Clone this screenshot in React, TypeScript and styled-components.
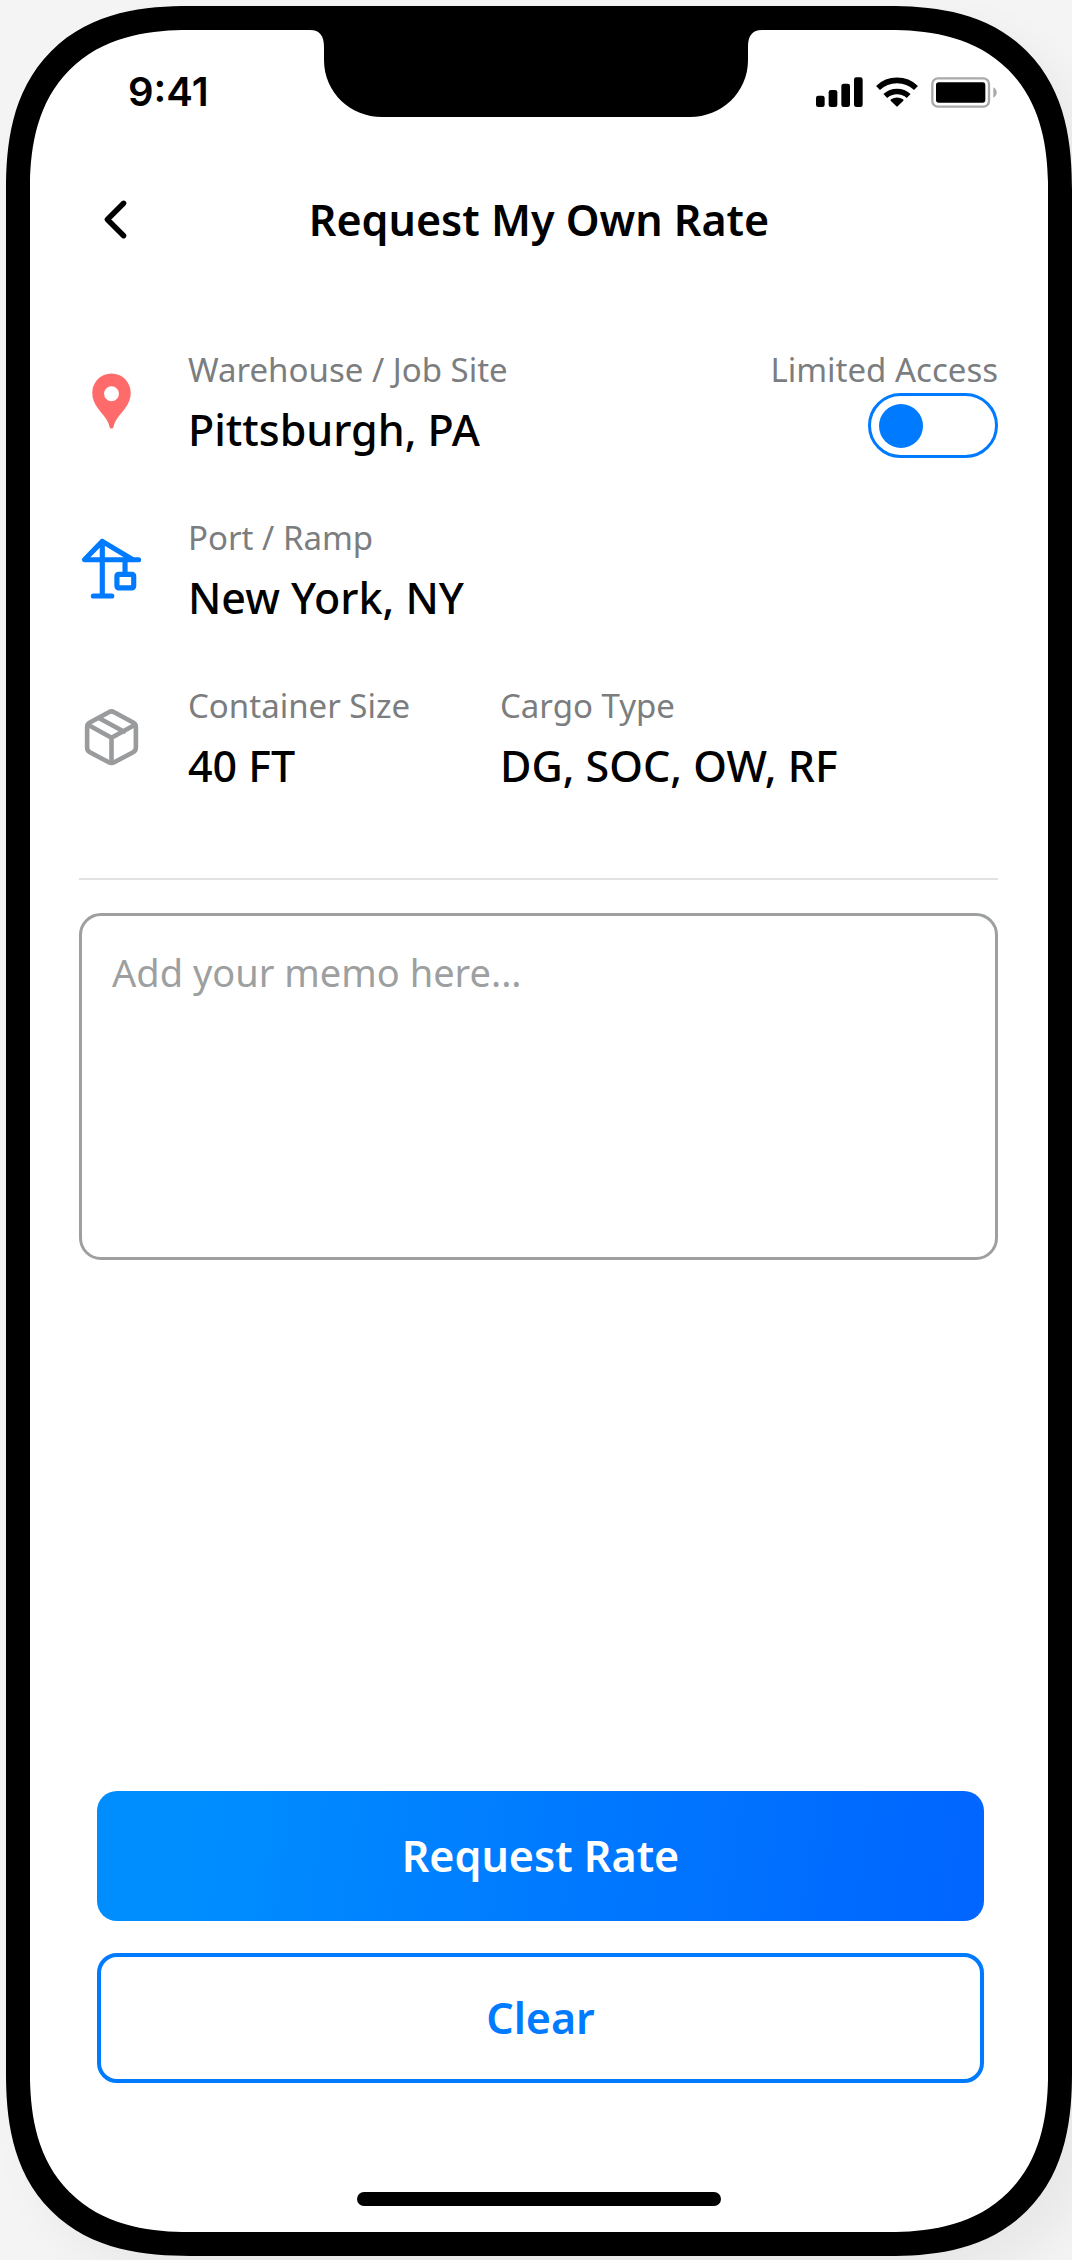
import React, { useState } from "react";
import styled, { createGlobalStyle } from "styled-components";
import { ChevronLeft } from "lucide-react";

const GlobalStyle = createGlobalStyle`
  *, *::before, *::after { box-sizing: border-box; }
  body {
    margin: 0;
    background: #f4f4f4;
    font-family: "Noto Sans", sans-serif;
    color: #000;
  }
  button, textarea, input { font: inherit; margin: 0; }
`;

const Page = styled.div`
  display: flex;
  min-height: 100vh;
  padding: 6px 0 4px 6px;
`;

const Phone = styled.main`
  position: relative;
  flex: 1;
  display: flex;
  flex-direction: column;
  border: 24px solid #000;
  border-radius: 152px;
  background: #fff;
  box-shadow: 24px 24px 48px rgba(0, 0, 0, 0.05);

  @supports (corner-shape: superellipse(1.3)) {
    border-radius: 184px;
    corner-shape: superellipse(1.3);
  }
`;

const Notch = styled.svg`
  position: absolute;
  top: -1px;
  left: calc(50% - 229px);
  width: 452px;
  height: 88px;
`;

const StatusBar = styled.div`
  display: flex;
  align-items: center;
  justify-content: space-between;
  height: 124px;
  padding: 0 51px 0 98px;
`;

const Clock = styled.time`
  font-family: Inter, sans-serif;
  font-size: 40px;
  font-weight: 600;
  line-height: 48px;
`;

const StatusIcons = styled.div`
  display: flex;
  align-items: center;
  gap: 13px;
`;

const Header = styled.header`
  display: grid;
  grid-template-columns: 65px 1fr 65px;
  align-items: center;
  margin-top: 33px;
  padding: 0 53px;
`;

const BackButton = styled.button`
  display: flex;
  padding: 0;
  border: 0;
  background: none;
  color: #000;
  cursor: pointer;
`;

const Title = styled.h1`
  margin: 0;
  font-size: 43px;
  font-weight: 600;
  line-height: 60px;
  text-align: center;
`;

const Details = styled.section`
  display: flex;
  flex-direction: column;
  gap: 56px;
  margin: 96px 50px 0 49px;
  padding-bottom: 82px;
  border-bottom: 2px solid #e2e2e2;
`;

const Row = styled.div`
  display: grid;
  grid-template-columns: 65px 312px 1fr;
  align-items: start;
`;

const RowIcon = styled.svg`
  width: 65px;
  height: 65px;
  margin-top: 21px;
`;

const Field = styled.div`
  display: flex;
  flex-direction: column;
  gap: 8px;
  padding-left: 44px;
  white-space: nowrap;
`;

const labelText = `
  color: #7b7d7f;
  font-size: 33px;
  line-height: 44px;
`;

const FieldLabel = styled.span`
  ${labelText}
`;

const FieldValue = styled.span`
  font-size: 43px;
  font-weight: 500;
  line-height: 60px;
`;

const Access = styled.label`
  ${labelText}
  justify-self: end;
  display: flex;
  flex-direction: column;
  align-items: flex-end;
  gap: 1px;
  white-space: nowrap;
  cursor: pointer;
`;

const Switch = styled.input`
  appearance: none;
  display: flex;
  align-items: center;
  width: 130px;
  height: 65px;
  padding: 0 8px;
  border: 3px solid #007bff;
  border-radius: 33px;
  cursor: pointer;

  &::before {
    content: "";
    width: 44px;
    height: 44px;
    border-radius: 50%;
    background: #007bff;
  }

  &:checked {
    justify-content: flex-end;
  }
`;

const Memo = styled.textarea`
  display: block;
  height: 347px;
  margin: 33px 50px 0 49px;
  padding: 30px;
  border: 3px solid #9d9fa0;
  border-radius: 22px;
  background: #fff;
  color: #000;
  font-size: 38px;
  line-height: 52px;
  resize: none;

  &::placeholder {
    color: #9d9fa0;
    opacity: 1;
  }
`;

const Actions = styled.div`
  display: flex;
  flex-direction: column;
  gap: 32px;
  margin-top: auto;
  padding: 48px 64px 0 67px;
`;

const ActionButton = styled.button<{ $primary?: boolean }>`
  height: 130px;
  border: ${(p) => (p.$primary ? "0" : "4px solid #007bff")};
  border-radius: 20px;
  background: ${(p) =>
    p.$primary ? "linear-gradient(98deg, #008eff 12%, #007bff 50%, #0066ff 96%)" : "#fff"};
  color: ${(p) => (p.$primary ? "#fff" : "#007bff")};
  font-size: 43px;
  font-weight: 600;
  line-height: 60px;
  cursor: pointer;
`;

const HomeIndicator = styled.div`
  align-self: center;
  width: 364px;
  height: 14px;
  margin: 109px 0 26px;
  border-radius: 7px;
  background: #000;
`;

function SignalIcon() {
  return (
    <svg width="47" height="30" viewBox="0 0 141 90" aria-hidden="true">
      <rect x="0" y="56" width="26" height="34" rx="7" />
      <rect x="38" y="39" width="26" height="51" rx="7" />
      <rect x="76" y="20" width="26" height="70" rx="7" />
      <rect x="114" y="1" width="26" height="89" rx="7" />
    </svg>
  );
}

function WifiIcon() {
  return (
    <svg width="42" height="30" viewBox="0 0 126 90" aria-hidden="true">
      <g fill="none" stroke="#000" strokeWidth="17">
        <path d="M6 33A83 83 0 0 1 120 33" />
        <path d="M28 57A52 52 0 0 1 98 57" />
      </g>
      <path d="M44 71Q42 69 45 67Q63 56 81 67Q84 69 82 71L65 88Q63 90 61 88Z" />
    </svg>
  );
}

function BatteryIcon() {
  return (
    <svg width="66" height="31" viewBox="0 0 198 93" aria-hidden="true">
      <rect x="4" y="4" width="170" height="85" rx="17" fill="none" stroke="#a9a9a9" strokeWidth="7" />
      <rect x="15" y="16" width="148" height="61" rx="8" />
      <path d="M187 31Q197 36 197 46.500Q197 57 187 62Z" fill="#a9a9a9" />
    </svg>
  );
}

function PinIcon() {
  return (
    <RowIcon viewBox="0 0 24 24" aria-hidden="true">
      <path
        fill="#ff6b6b"
        fillRule="evenodd"
        d="M12 1.700C8.050 1.700 4.900 4.850 4.900 8.800C4.900 11.100 5.700 12.900 7.100 14.700C8.400 16.400 9.900 17.900 10.800 19.800C11.050 20.400 11.100 20.900 11.300 21.400C11.450 21.850 11.600 22 12 22S12.550 21.850 12.700 21.400C12.900 20.900 12.950 20.400 13.200 19.800C14.100 17.900 15.600 16.400 16.900 14.700C18.300 12.900 19.100 11.100 19.100 8.800C19.100 4.850 15.950 1.700 12 1.700ZM12 6.400A2.750 2.750 0 1 1 12 11.900A2.750 2.750 0 1 1 12 6.400Z"
      />
    </RowIcon>
  );
}

function CraneIcon() {
  return (
    <RowIcon
      viewBox="0 0 24 24"
      fill="none"
      stroke="#007bff"
      strokeWidth="1.900"
      strokeLinecap="round"
      strokeLinejoin="round"
      aria-hidden="true"
    >
      <path d="M5.300 21.800H12.100M8.600 21.800V1.600L2 8.400H22M8.600 1.600L19.900 8.400M17 8.400V13.700" />
      <rect x="14" y="13.800" width="6.200" height="5" rx="0.600" />
    </RowIcon>
  );
}

function PackageIcon() {
  return (
    <RowIcon
      viewBox="0 0 24 24"
      fill="none"
      stroke="#999b9d"
      strokeWidth="1.700"
      strokeLinecap="round"
      strokeLinejoin="round"
      aria-hidden="true"
    >
      <path d="M16.500 9.800L7.500 4.900M21 15.700V8.200a2 2 0 0 0-1-1.730l-7-3.800a2 2 0 0 0-2 0l-7 3.800A2 2 0 0 0 3 8.200v7.500a2 2 0 0 0 1 1.730l7 3.700a2 2 0 0 0 2 0l7-3.700A2 2 0 0 0 21 15.700z" />
      <path d="M3.300 7.300L12 12.100L20.700 7.300M12 21.300V12.100" />
    </RowIcon>
  );
}

export default function App() {
  const [limited, setLimited] = useState(false);
  const [memo, setMemo] = useState("");

  return (
    <>
      <GlobalStyle />
      <Page>
        <Phone>
          <Notch viewBox="0 0 452 88" aria-hidden="true">
            <path d="M0 0V1C10 1 14 7 14 18V31C14 64 41 88 72 88H380C411 88 438 64 438 31V18C438 7 442 1 452 1V0Z" />
          </Notch>
          <StatusBar>
            <Clock>9:41</Clock>
            <StatusIcons>
              <SignalIcon />
              <WifiIcon />
              <BatteryIcon />
            </StatusIcons>
          </StatusBar>
          <Header>
            <BackButton type="button" aria-label="Back">
              <ChevronLeft size={65} strokeWidth={2} />
            </BackButton>
            <Title>Request My Own Rate</Title>
          </Header>
          <Details>
            <Row>
              <PinIcon />
              <Field>
                <FieldLabel>Warehouse / Job Site</FieldLabel>
                <FieldValue>Pittsburgh, PA</FieldValue>
              </Field>
              <Access>
                Limited Access
                <Switch
                  type="checkbox"
                  role="switch"
                  checked={limited}
                  onChange={(e) => setLimited(e.target.checked)}
                />
              </Access>
            </Row>
            <Row>
              <CraneIcon />
              <Field>
                <FieldLabel>Port / Ramp</FieldLabel>
                <FieldValue>New York, NY</FieldValue>
              </Field>
            </Row>
            <Row>
              <PackageIcon />
              <Field>
                <FieldLabel>Container Size</FieldLabel>
                <FieldValue>40 FT</FieldValue>
              </Field>
              <Field>
                <FieldLabel>Cargo Type</FieldLabel>
                <FieldValue>DG, SOC, OW, RF</FieldValue>
              </Field>
            </Row>
          </Details>
          <Memo
            aria-label="Memo"
            placeholder="Add your memo here..."
            value={memo}
            onChange={(e) => setMemo(e.target.value)}
          />
          <Actions>
            <ActionButton type="button" $primary>
              Request Rate
            </ActionButton>
            <ActionButton type="button" onClick={() => setMemo("")}>
              Clear
            </ActionButton>
          </Actions>
          <HomeIndicator />
        </Phone>
      </Page>
    </>
  );
}
